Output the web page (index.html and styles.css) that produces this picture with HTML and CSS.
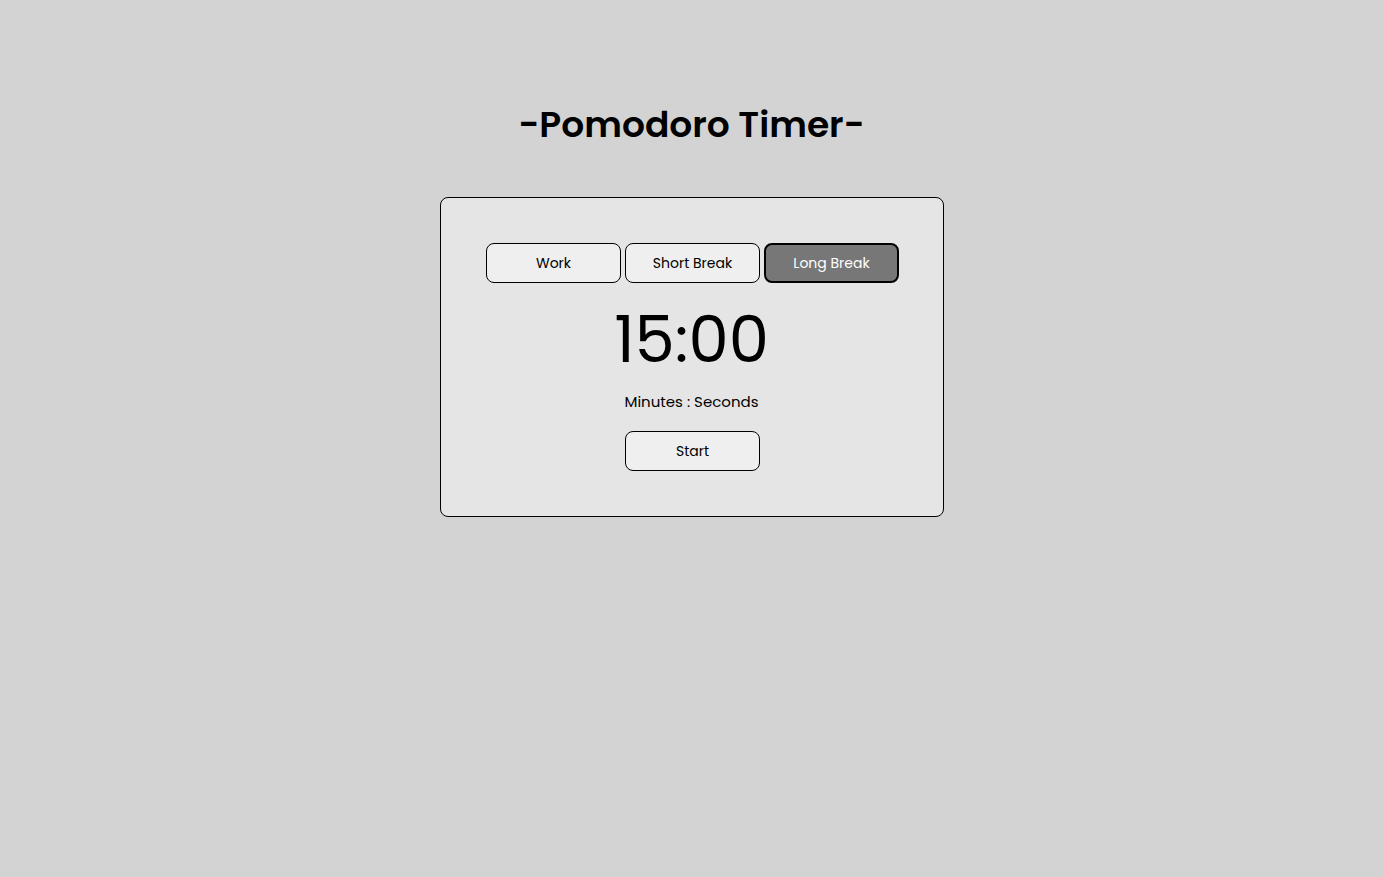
FILE: index.html
```html
<!DOCTYPE html>
<html lang="en">
<head>
  <meta charset="UTF-8" />
  <meta name="viewport" content="width=device-width, initial-scale=1.0"/>
  <title>Pomodoro Timer</title>
  <link rel="stylesheet" href="styles.css">
</head>
<body>
  <h1 class="titulo">-Pomodoro Timer-</h1>

  <div class="card">
    <div class="modos">
      <button class="modo">Work</button>
      <button class="modo">Short Break</button>
      <button class="modo ativo">Long Break</button>
    </div>
    <div class="tempo">15:00</div>
    <p class="legenda">Minutes : Seconds</p>
    <button class="start">Start</button>
  </div>
</body>
</html>
```

FILE: styles.css
```css
body {
  margin: 0;
  padding: 0;
  background-color: #d3d3d3;
  color: black;
  font-family: 'Poppins', 'Inter', sans-serif;
  text-align: center;
}

.titulo {
  font-size: 36px;
  font-weight: 600;
  margin: 100px 0 47px;
  line-height: 50px;
}

.card {
  box-sizing: border-box;
  width: 504px;
  margin: 0 auto;
  padding: 45px 0;
  background-color: #e5e5e5;
  border: 1px solid black;
  border-radius: 8px;
  display: flex;
  flex-direction: column;
  align-items: center;
}

.modos {
  display: flex;
  gap: 4px;
  margin-left: 2px;
}

.modo,
.start {
  width: 135px;
  height: 40px;
  background-color: #efefef;
  border: 1px solid black;
  border-radius: 8px;
  font-family: inherit;
  font-size: 14px;
  color: black;
  cursor: pointer;
}

.modo.ativo {
  background-color: #777;
  color: white;
  border: 2px solid black;
}

.tempo {
  font-size: 64px;
  line-height: 1;
  margin-top: 25px;
}

.legenda {
  font-size: 15px;
  margin: 18px 0;
}

.start {
  margin-left: 2px;
}
```
